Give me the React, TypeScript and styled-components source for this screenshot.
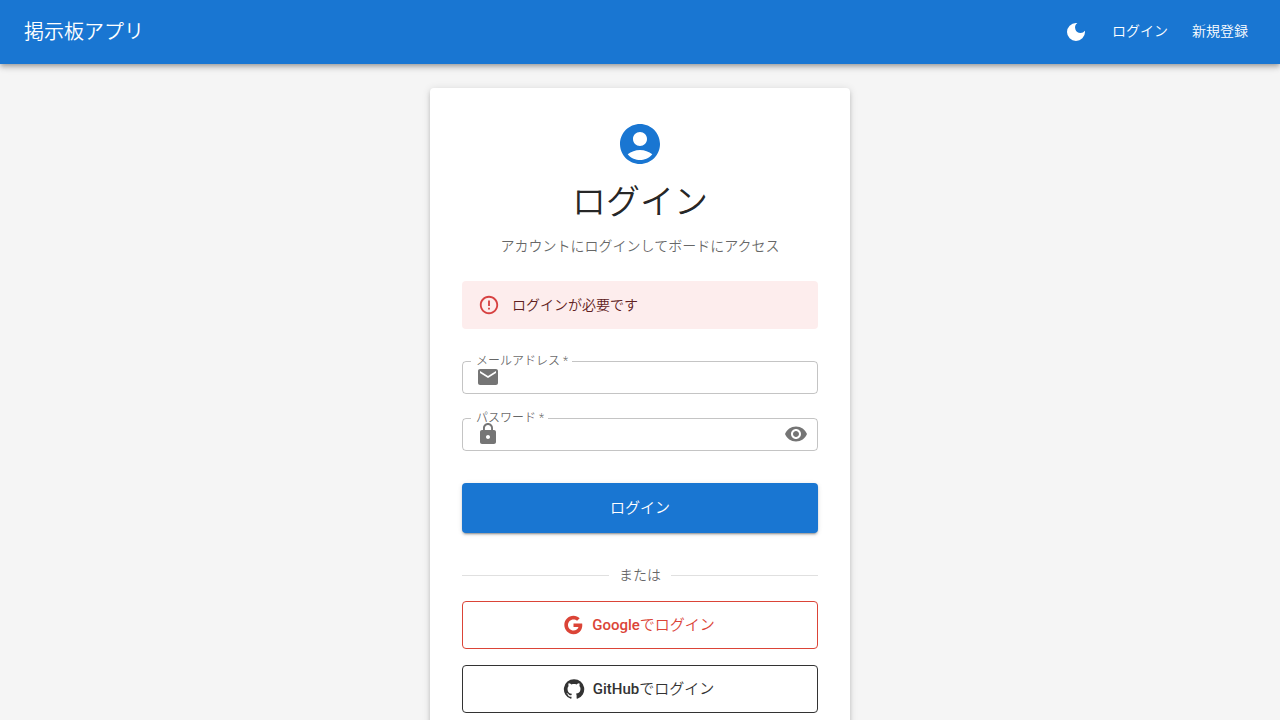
import type { InputHTMLAttributes, ReactNode } from 'react';
import { useState } from 'react';
import styled, { createGlobalStyle } from 'styled-components';
import { MdDarkMode, MdEmail, MdErrorOutline, MdLock, MdVisibility, MdVisibilityOff } from 'react-icons/md';

const GlobalStyle = createGlobalStyle`
  *, *::before, *::after { box-sizing: border-box; }
  body {
    margin: 0;
    background: #f5f5f5;
    color: rgba(0, 0, 0, 0.87);
    font-family: Roboto, "Noto Sans CJK JP", sans-serif;
    font-size: 16px;
    font-weight: 350;
    line-height: 24px;
  }
  button, input {
    font-family: inherit;
    font-weight: inherit;
  }
`;

const AppBar = styled.header`
  position: relative;
  display: flex;
  align-items: center;
  gap: 8px;
  height: 64px;
  padding: 0 24px;
  color: #fff;
  background: #1976d2;
  box-shadow: 0 2px 4px -1px rgba(0, 0, 0, 0.2), 0 4px 5px 0 rgba(0, 0, 0, 0.14),
    0 1px 10px 0 rgba(0, 0, 0, 0.12);
`;

const Brand = styled.div`
  flex: 1;
  font-size: 20px;
  line-height: 32px;
`;

const IconButton = styled.button`
  display: flex;
  padding: 8px;
  border: 0;
  border-radius: 50%;
  color: inherit;
  background: transparent;
  font-size: 24px;
  cursor: pointer;
`;

const NavLink = styled.a`
  padding: 5px 8px 7px;
  border-radius: 4px;
  color: inherit;
  font-size: 14px;
  line-height: 24px;
  text-decoration: none;
`;

const Main = styled.main`
  max-width: 468px;
  margin: 0 auto;
  padding: 24px;
`;

const Card = styled.section`
  padding: 32px;
  border-radius: 4px;
  background: #fff;
  box-shadow: 0 3px 3px -2px rgba(0, 0, 0, 0.2), 0 3px 4px 0 rgba(0, 0, 0, 0.14),
    0 1px 8px 0 rgba(0, 0, 0, 0.12);
`;

const CardHeader = styled.div`
  display: flex;
  flex-direction: column;
  align-items: center;
  margin-bottom: 24px;
  text-align: center;
`;

const Avatar = styled.svg`
  width: 48px;
  height: 48px;
  margin-bottom: 8px;
  fill: #1976d2;
`;

const Title = styled.h1`
  margin: 0 0 8px;
  font-size: 34px;
  font-weight: inherit;
  line-height: 52px;
`;

const Subtitle = styled.p`
  margin: 0;
  color: rgba(0, 0, 0, 0.6);
  font-size: 14px;
  line-height: 21px;
`;

const Alert = styled.div`
  display: flex;
  align-items: center;
  gap: 12px;
  height: 48px;
  margin-bottom: 32px;
  padding: 0 16px;
  border-radius: 4px;
  color: #5f2120;
  background: #fdeded;
  font-size: 14px;
  line-height: 20px;

  svg {
    color: #d32f2f;
    font-size: 22px;
    opacity: 0.9;
  }
`;

const Form = styled.form`
  display: flex;
  flex-direction: column;
  gap: 24px;
`;

const FieldBox = styled.div`
  position: relative;
  display: flex;
  align-items: center;
  gap: 8px;
  height: 33px;
  padding: 0 9px 1px 13px;
  border: 1px solid rgba(0, 0, 0, 0.23);
  border-radius: 4px;

  &:focus-within { border-color: #1976d2; }

  svg {
    position: relative;
    flex: none;
    color: rgba(0, 0, 0, 0.54);
    font-size: 24px;
  }
`;

const FieldLabel = styled.label`
  position: absolute;
  top: -9px;
  left: 8px;
  padding: 0 4px 0 5px;
  color: rgba(0, 0, 0, 0.6);
  background: #fff;
  font-size: 12px;
  line-height: 16px;
`;

const FieldInput = styled.input`
  flex: 1;
  min-width: 0;
  height: 24px;
  padding: 0;
  border: 0;
  outline: 0;
  background: transparent;
  font-size: 16px;
`;

const RevealButton = styled(IconButton)`
  padding: 0;
`;

const SubmitButton = styled.button`
  height: 50px;
  margin-top: 8px;
  padding: 0 16px 4px;
  border: 0;
  border-radius: 4px;
  color: #fff;
  background: #1976d2;
  box-shadow: 0 3px 1px -2px rgba(0, 0, 0, 0.2), 0 2px 2px 0 rgba(0, 0, 0, 0.14),
    0 1px 5px 0 rgba(0, 0, 0, 0.12);
  font-size: 15px;
  cursor: pointer;
`;

const Divider = styled.div`
  display: flex;
  align-items: center;
  gap: 10px;
  margin: 32px 0 16px;
  color: rgba(0, 0, 0, 0.6);
  font-size: 14px;
  line-height: 20px;

  &::before, &::after {
    content: '';
    flex: 1;
    border-top: 1px solid rgba(0, 0, 0, 0.12);
  }
`;

const SocialList = styled.div`
  display: flex;
  flex-direction: column;
  gap: 16px;
`;

const SocialButton = styled.button<{ $color: string }>`
  display: flex;
  align-items: center;
  justify-content: center;
  gap: 8px;
  height: 48px;
  padding: 0 16px;
  border: 1px solid ${({ $color }) => $color};
  border-radius: 4px;
  color: ${({ $color }) => $color};
  background: transparent;
  font-size: 15px;
  cursor: pointer;

  svg {
    width: 22px;
    height: 22px;
    margin-left: -3px;
    fill: currentColor;
  }
`;

const SocialLabel = styled.span`
  padding-bottom: 3px;
`;

const Provider = styled.span`
  font-weight: 500;
`;

type FieldProps = InputHTMLAttributes<HTMLInputElement> & {
  id: string;
  label: string;
  icon: ReactNode;
  action?: ReactNode;
};

function Field({ id, label, icon, action, ...input }: FieldProps) {
  return (
    <FieldBox>
      <FieldLabel htmlFor={id}>{label} *</FieldLabel>
      {icon}
      <FieldInput id={id} required {...input} />
      {action}
    </FieldBox>
  );
}

export default function App() {
  const [revealed, setRevealed] = useState(false);

  return (
    <>
      <GlobalStyle />
      <AppBar>
        <Brand>掲示板アプリ</Brand>
        <IconButton type="button" aria-label="テーマ切替">
          <MdDarkMode />
        </IconButton>
        <NavLink href="#login">ログイン</NavLink>
        <NavLink href="#register">新規登録</NavLink>
      </AppBar>
      <Main>
        <Card>
          <CardHeader>
            <Avatar viewBox="0 0 24 24" aria-hidden="true">
              <path d="M12 2C6.48 2 2 6.48 2 12s4.48 10 10 10 10-4.48 10-10S17.52 2 12 2zm0 4c1.93 0 3.5 1.57 3.5 3.5S13.93 13 12 13s-3.5-1.57-3.5-3.5S10.07 6 12 6zm0 14c-2.03 0-4.43-.82-6.14-2.88C7.55 15.8 9.68 15 12 15s4.45.8 6.14 2.12C16.43 19.18 14.03 20 12 20z" />
            </Avatar>
            <Title>ログイン</Title>
            <Subtitle>アカウントにログインしてボードにアクセス</Subtitle>
          </CardHeader>
          <Alert role="alert">
            <MdErrorOutline />
            ログインが必要です
          </Alert>
          <Form onSubmit={(event) => event.preventDefault()}>
            <Field id="email" type="email" label="メールアドレス" icon={<MdEmail />} autoComplete="email" />
            <Field
              id="password"
              type={revealed ? 'text' : 'password'}
              label="パスワード"
              icon={<MdLock />}
              autoComplete="current-password"
              action={
                <RevealButton type="button" aria-label="パスワードを表示" onClick={() => setRevealed(!revealed)}>
                  {revealed ? <MdVisibilityOff /> : <MdVisibility />}
                </RevealButton>
              }
            />
            <SubmitButton type="submit">ログイン</SubmitButton>
          </Form>
          <Divider>または</Divider>
          <SocialList>
            <SocialButton type="button" $color="#db4437">
              <svg viewBox="0 0 24 24" aria-hidden="true">
                <path d="M12.545,10.239v3.821h5.445c-0.712,2.315-2.647,3.972-5.445,3.972c-3.332,0-6.033-2.701-6.033-6.032s2.701-6.032,6.033-6.032c1.498,0,2.866,0.549,3.921,1.453l2.814-2.814C17.503,2.988,15.139,2,12.545,2C7.021,2,2.543,6.477,2.543,12s4.478,10,10.002,10c8.396,0,10.249-7.85,9.426-11.748L12.545,10.239z" />
              </svg>
              <SocialLabel><Provider>Google</Provider>でログイン</SocialLabel>
            </SocialButton>
            <SocialButton type="button" $color="#333">
              <svg viewBox="0 0 24 24" aria-hidden="true">
                <path d="M12 1.27a11 11 0 00-3.48 21.46c.55.09.73-.28.73-.55v-1.84c-3.03.64-3.67-1.46-3.67-1.46-.55-1.29-1.28-1.65-1.28-1.65-.92-.65.1-.65.1-.65 1.1 0 1.73 1.1 1.73 1.1.92 1.65 2.57 1.2 3.21.92a2 2 0 01.64-1.47c-2.47-.27-5.04-1.19-5.04-5.5 0-1.1.46-2.1 1.2-2.84a3.76 3.76 0 010-2.93s.91-.28 3.11 1.1c1.8-.49 3.7-.49 5.5 0 2.1-1.38 3.02-1.1 3.02-1.1a3.76 3.76 0 01.1 2.93c.83.74 1.2 1.74 1.2 2.94 0 4.21-2.57 5.13-5.04 5.4.45.37.82.92.82 2.02v3.03c0 .27.1.64.73.55A11 11 0 0012 1.27" />
              </svg>
              <SocialLabel><Provider>GitHub</Provider>でログイン</SocialLabel>
            </SocialButton>
          </SocialList>
        </Card>
      </Main>
    </>
  );
}
